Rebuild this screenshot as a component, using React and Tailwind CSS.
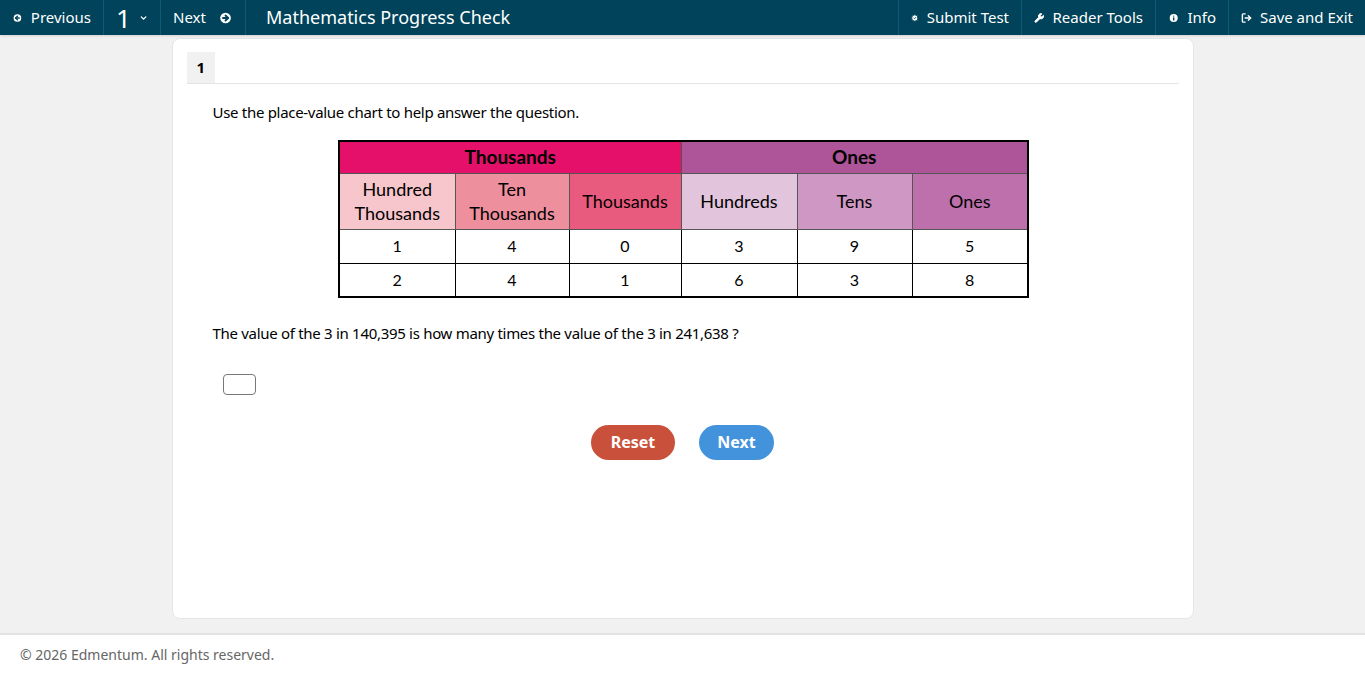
import { CircleArrowLeft, CircleArrowRight, ChevronDown, CircleCheck, Wrench, Info, LogOut } from 'lucide-react';

const cols = [
  { label: ['Hundred', 'Thousands'], bg: 'bg-[#f7c6cc]', w: 'w-[116px]' },
  { label: ['Ten', 'Thousands'], bg: 'bg-[#ee8f9e]', w: 'w-[114px]' },
  { label: ['Thousands'], bg: 'bg-[#e85a7e]', w: 'w-[112px]' },
  { label: ['Hundreds'], bg: 'bg-[#e2c4dc]', w: 'w-[116px]' },
  { label: ['Tens'], bg: 'bg-[#cf97c4]', w: 'w-[115px]' },
  { label: ['Ones'], bg: 'bg-[#bd70ab]', w: 'w-[116px]' },
];
const rows = [
  [1, 4, 0, 3, 9, 5],
  [2, 4, 1, 6, 3, 8],
];

function NavBtn({ children, className = '' }) {
  return (
    <div className={`flex items-center gap-2 h-full whitespace-nowrap border-r border-[#0f5a74] text-[15px] text-white ${className}`}>
      {children}
    </div>
  );
}

export default function App() {
  return (
    <div className="min-h-screen flex flex-col bg-[#f1f1f1] font-[family-name:'Liberation_Sans',Arial,sans-serif]">
      <div className="h-[35px] bg-[#00435a] flex items-center shadow">
        <NavBtn className="px-3 w-[104px]"><CircleArrowLeft className="w-4 h-4 fill-white text-[#00435a]" strokeWidth={3} />Previous</NavBtn>
        <NavBtn className="px-3 w-[57px] justify-center gap-1"><span className="text-[26px] leading-none">1</span><ChevronDown className="w-4 h-4" strokeWidth={3.5} /></NavBtn>
        <NavBtn className="px-3 w-[85px]">Next<CircleArrowRight className="w-4 h-4 fill-white text-[#00435a] ml-1" strokeWidth={3} /></NavBtn>
        <div className="pl-5 text-white text-[18px]">Mathematics Progress Check</div>
        <div className="ml-auto flex h-full border-l border-[#0f5a74]">
          <NavBtn className="px-3 w-[123px]"><CircleCheck className="w-4 h-4 fill-white text-[#00435a]" strokeWidth={3} />Submit Test</NavBtn>
          <NavBtn className="px-3 w-[134px]"><Wrench className="w-4 h-4 fill-white" />Reader Tools</NavBtn>
          <NavBtn className="px-3 w-[73px]"><Info className="w-4 h-4 fill-white text-[#00435a]" strokeWidth={3} />Info</NavBtn>
          <NavBtn className="px-3 w-[136px] border-r-0"><LogOut className="w-4 h-4" strokeWidth={3} />Save and Exit</NavBtn>
        </div>
      </div>

      <div className="flex-1 flex justify-center pt-[3px] pb-[14px]">
        <div className="w-[1022px] h-[581px] bg-white rounded-lg border border-[#e6e6e6] px-[14px] pt-[13px]">
          <div className="border-b border-[#e5e5e5]">
            <div className="inline-block bg-[#f1f1f1] px-[10px] py-[4px] text-[15px] font-bold">1</div>
          </div>
          <p className="mt-[17px] ml-[26px] text-[15px] text-black tracking-[-0.3px]">Use the place-value chart to help answer the question.</p>
          <div className="flex justify-center mt-[17px] pl-[2px]">
            <table className="border-2 border-black border-collapse font-[family-name:Lato,sans-serif] text-[18px] text-black">
              <thead>
                <tr className="h-[32px]">
                  <th colSpan={3} className="bg-[#e5106a] border border-[#555] font-bold text-[19px]">Thousands</th>
                  <th colSpan={3} className="bg-[#ae5499] border border-[#555] font-bold text-[19px]">Ones</th>
                </tr>
                <tr className="h-[56px]">
                  {cols.map((c, i) => (
                    <th key={i} className={`${c.bg} ${c.w} border border-[#555] font-normal leading-[24px]`}>
                      {c.label.map(l => <div key={l}>{l}</div>)}
                    </th>
                  ))}
                </tr>
              </thead>
              <tbody>
                {rows.map((r, i) => (
                  <tr key={i} className="h-[34px]">
                    {r.map((v, j) => (
                      <td key={j} className="border border-black text-center text-[16px]">{v}</td>
                    ))}
                  </tr>
                ))}
              </tbody>
            </table>
          </div>
          <p className="mt-[24px] ml-[26px] text-[15px] text-black tracking-[-0.3px]">The value of the 3 in 140,395 is how many times the value of the 3 in 241,638 ?</p>
          <div className="mt-[29px] ml-[36px] w-[33px] h-[21px] border border-[#777] rounded-sm" />
          <div className="flex justify-center gap-6 mt-[30px]">
            <button className="w-[84px] h-[35px] rounded-full bg-[#c9503a] text-white font-bold text-[16px]">Reset</button>
            <button className="w-[75px] h-[35px] rounded-full bg-[#4393dc] text-white font-bold text-[16px]">Next</button>
          </div>
        </div>
      </div>

      <div className="bg-white border-t-2 border-[#e2e2e2] h-[41px] flex items-center px-5 text-[14px] text-[#666]">
        © 2026 Edmentum. All rights reserved.
      </div>
    </div>
  );
}
